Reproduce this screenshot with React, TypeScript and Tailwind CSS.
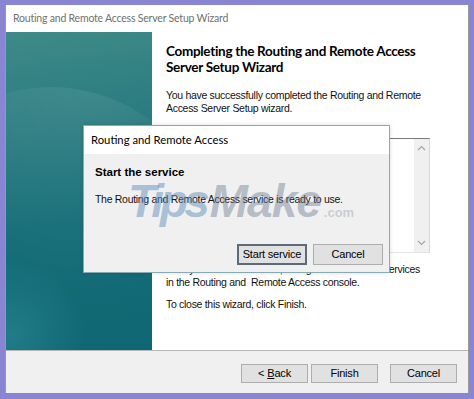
import React from "react";

const sans = "font-['Liberation_Sans',Arial,sans-serif]";
const ui = "font-['Lato','Noto_Sans',sans-serif]";

function Chevron({ up }: { up?: boolean }) {
  return (
    <svg width="9" height="6" viewBox="0 0 9 6" className="block">
      <path
        d={up ? "M1 5 L4.5 1.5 L8 5" : "M1 1 L4.5 4.5 L8 1"}
        fill="none"
        stroke="#a6a6a6"
        strokeWidth="1.2"
      />
    </svg>
  );
}

function WinButton({
  children,
  focused,
  className = "",
}: {
  children: React.ReactNode;
  focused?: boolean;
  className?: string;
}) {
  return (
    <div
      className={`flex items-center justify-center bg-[#e1e1e1] text-[11px] text-black tracking-[-0.2px] ${sans} ${
        focused ? "border-2 border-[#5d6b78]" : "border border-[#adadad]"
      } ${className}`}
    >
      {children}
    </div>
  );
}

export default function App() {
  return (
    <div className="relative w-[474px] h-[399px] bg-[#8985d2] pt-[5px] pl-[5px] pr-[5px] pb-[6px]">
      {/* wizard window */}
      <div className="flex flex-col h-full bg-white border-l border-r border-[#9a9a9a]">
        <div className={`h-[27px] flex items-center pl-[7px] text-[10.5px] tracking-[-0.2px] text-[#707070] ${ui}`}>
          Routing and Remote Access Server Setup Wizard
        </div>

        <div className="flex flex-1 border-b border-[#b5b5b5]">
          <div className="relative shrink-0 w-[146px] overflow-hidden bg-[linear-gradient(172deg,#3e8a88_0%,#2a7c80_30%,#156d78_60%,#0f6773_100%)]">
            <div className="absolute left-[-120px] top-[55px] w-[330px] h-[330px] rounded-full bg-[radial-gradient(circle_at_60%_0%,rgba(255,255,255,0.07),rgba(255,255,255,0)_55%)]" />
            <div className="absolute left-[-70px] bottom-[-60px] w-[150px] h-[150px] rounded-full bg-[radial-gradient(circle,rgba(60,160,170,0.35),rgba(60,160,170,0)_70%)]" />
          </div>

          <div className={`flex-1 min-w-0 pl-[14px] pr-[38px] pt-[11px] ${sans}`}>
            <div className={`text-[13.5px] leading-[16px] font-bold text-black tracking-[-0.3px] ${ui}`}>
              Completing the Routing and Remote Access Server Setup Wizard
            </div>
            <p className="mt-[14px] text-[10.5px] leading-[13px] text-[#111] tracking-[-0.3px]">
              You have successfully completed the Routing and Remote Access
              Server Setup wizard.
            </p>

            <div className="mt-[23px] h-[115px] flex border-t border-[#7a7a7a] border-r border-r-[#d8d8d8] border-b border-b-[#e4e4e4]">
              <div className="flex-1" />
              <div className="w-[15px] bg-[#f0f0f0] flex flex-col items-center justify-between py-[6px]">
                <Chevron up />
                <Chevron />
              </div>
            </div>

            <p className="mt-[10px] text-[10.5px] leading-[13px] text-[#111] tracking-[-0.3px] whitespace-nowrap">
              After you close this wizard, configure the selected services
              <br />
              in the Routing and&nbsp; Remote Access console.
            </p>
            <p className="mt-[9px] text-[10.5px] leading-[13px] text-[#111] tracking-[-0.3px]">
              To close this wizard, click Finish.
            </p>
          </div>
        </div>

        <div className="h-[42px] bg-[#f0f0f0] flex justify-end items-start pt-[13px] pr-[11px]">
          <WinButton className="w-[67px] h-[19px]">
            &lt; <span className="underline ml-[3px]">B</span>ack
          </WinButton>
          <WinButton className="w-[67px] h-[19px] ml-[3px]">Finish</WinButton>
          <WinButton className="w-[67px] h-[19px] ml-[12px]">Cancel</WinButton>
        </div>
      </div>

      {/* service dialog */}
      <div className="absolute left-[83px] top-[125px] w-[307px] h-[148px] flex flex-col border border-[#88aab4] bg-[#f0f0f0] shadow-[0_0_4px_rgba(0,0,0,0.15)]">
        <div className={`h-[28px] bg-white flex items-center pl-[7px] text-[11.3px] text-black ${ui}`}>
          Routing and Remote Access
        </div>
        <div className={`flex-1 flex flex-col pl-[11px] pr-[6px] pt-[11px] pb-[7px] ${sans}`}>
          <div className="text-[11.5px] leading-[14px] font-bold text-black">
            Start the service
          </div>
          <div className="mt-[13px] text-[10.5px] leading-[14px] text-[#111] tracking-[-0.3px]">
            The Routing and Remote Access service is ready to use.
          </div>
          <div className="mt-auto flex justify-end">
            <WinButton focused className="w-[70px] h-[21px]">
              Start service
            </WinButton>
            <WinButton className="w-[70px] h-[21px] ml-[6px]">Cancel</WinButton>
          </div>
        </div>
      </div>

      {/* watermark */}
      <div className="absolute left-[128px] top-[178px] pointer-events-none flex items-baseline font-['Liberation_Sans',Arial,sans-serif] font-bold italic">
        <span className="text-[46px] leading-none tracking-[-4px] text-[rgba(98,144,188,0.5)]">
          Tips
        </span>
        <span className="ml-[4px] text-[46px] leading-none tracking-[-1px] text-[rgba(108,124,144,0.45)]">
          Make
        </span>
        <span className="ml-[3px] text-[13px] not-italic text-[rgba(150,160,170,0.45)]">
          .com
        </span>
      </div>
    </div>
  );
}
